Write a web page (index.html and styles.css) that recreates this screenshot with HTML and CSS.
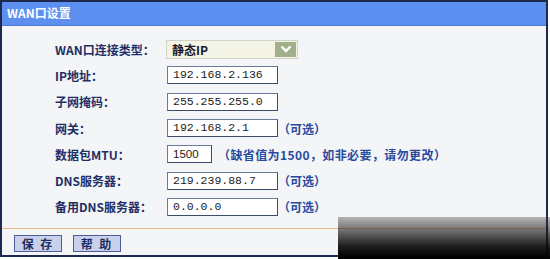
FILE: index.html
```html
<!DOCTYPE html>
<html>
  <head>
    <meta http-equiv="Content-Type" content="text/html; charset=UTF-8" />
    <title>WAN口设置</title>
    <link rel="stylesheet" href="styles.css">
  </head>
  <body>
    <div class="panel">
      <div class="title">WAN口设置</div>

      <div class="form">
        <div class="row">
          <span class="label">WAN口连接类型：</span>
          <div class="select">
            <span class="select-text">静态IP</span>
            <span class="arrow">
              <svg width="12" height="8" viewBox="0 0 12 8"><path d="M1.5 1.5 L6 6 L10.5 1.5" fill="none" stroke="#fff" stroke-width="2.4"/></svg>
            </span>
          </div>
        </div>
        <div class="row">
          <span class="label">IP地址：</span>
          <div class="field">192.168.2.136</div>
        </div>
        <div class="row">
          <span class="label">子网掩码：</span>
          <div class="field">255.255.255.0</div>
        </div>
        <div class="row">
          <span class="label">网关：</span>
          <div class="field">192.168.2.1</div>
          <span class="hint">（可选）</span>
        </div>
        <div class="row">
          <span class="label">数据包MTU：</span>
          <div class="field short">1500</div>
          <span class="hint wide">（缺省值为1500，如非必要，请勿更改）</span>
        </div>
        <div class="row">
          <span class="label">DNS服务器：</span>
          <div class="field">219.239.88.7</div>
          <span class="hint">（可选）</span>
        </div>
        <div class="row">
          <span class="label">备用DNS服务器：</span>
          <div class="field">0.0.0.0</div>
          <span class="hint">（可选）</span>
        </div>
      </div>

      <div class="actions">
        <button class="btn">保 存</button>
        <button class="btn">帮 助</button>
      </div>
    </div>
    <div class="watermark"></div>
  </body>
</html>
```

FILE: styles.css
```css
body{
  margin:0;
  background-color:#ffffff;
  font-family:"Noto Sans CJK SC","DejaVu Sans",sans-serif;
  width:550px;
  height:259px;
  position:relative;
  overflow:hidden;
}
.panel{
  width:544px;
  height:253px;
  border:2px solid #1d2a4e;
  background-color:#f4f5f7;
  display:flex;
  flex-direction:column;
}
.title{
  height:23px;
  line-height:22px;
  background-color:#5d8ff0;
  border-bottom:1px solid #4a78d8;
  color:#ffffff;
  font-size:12px;
  font-weight:bold;
  padding-left:5px;
}
.form{
  padding:10px 0 0 53px;
  display:flex;
  flex-direction:column;
}
.row{
  height:26.3px;
  display:flex;
  align-items:center;
}
.label{
  width:112px;
  color:#1f2f66;
  font-size:12px;
  font-weight:bold;
}
.select{
  width:130px;
  height:17px;
  border:1px solid #cfd2c4;
  background-color:#f3f3e6;
  display:flex;
  align-items:center;
  justify-content:space-between;
  margin-left:-1px;
}
.select-text{
  padding-left:5px;
  color:#1a1a2a;
  font-size:12px;
  font-weight:bold;
}
.arrow{
  width:21px;
  height:15px;
  margin-right:1px;
  background-color:#9fb08a;
  display:flex;
  align-items:center;
  justify-content:center;
}
.field{
  width:104px;
  height:16px;
  line-height:16px;
  border:1px solid #6c7a9c;
  border-right-color:#3d4a6a;
  border-bottom-color:#3d4a6a;
  background-color:#ffffff;
  padding-left:5px;
  font-family:"Liberation Mono","DejaVu Sans Mono",monospace;
  font-size:11.5px;
  color:#1a1a1a;
}
.field.short{
  width:38px;
  font-family:"Liberation Sans",sans-serif;
  font-size:11.5px;
}
.hint{
  color:#2a4a9e;
  font-size:12px;
  font-weight:bold;
  margin-left:0px;
}
.hint.wide{
  margin-left:6px;
  letter-spacing:0.4px;
}
.actions{
  margin-top:auto;
  border-top:1px solid #e8b488;
  padding:6px 0 3px 12px;
  display:flex;
  gap:11px;
}
.btn{
  width:48px;
  height:17px;
  padding:0;
  border:1px solid #4d5d9a;
  background-color:#c9d1ea;
  color:#1d2b64;
  font-family:"Noto Sans CJK SC",sans-serif;
  font-size:12px;
  font-weight:bold;
  line-height:15px;
  letter-spacing:2px;
}
.watermark{
  position:absolute;
  left:338px;
  top:217px;
  width:212px;
  height:42px;
  background:linear-gradient(to bottom,rgba(60,60,60,0.35),rgba(10,10,10,0.92) 70%,rgba(0,0,0,1));
}
```
